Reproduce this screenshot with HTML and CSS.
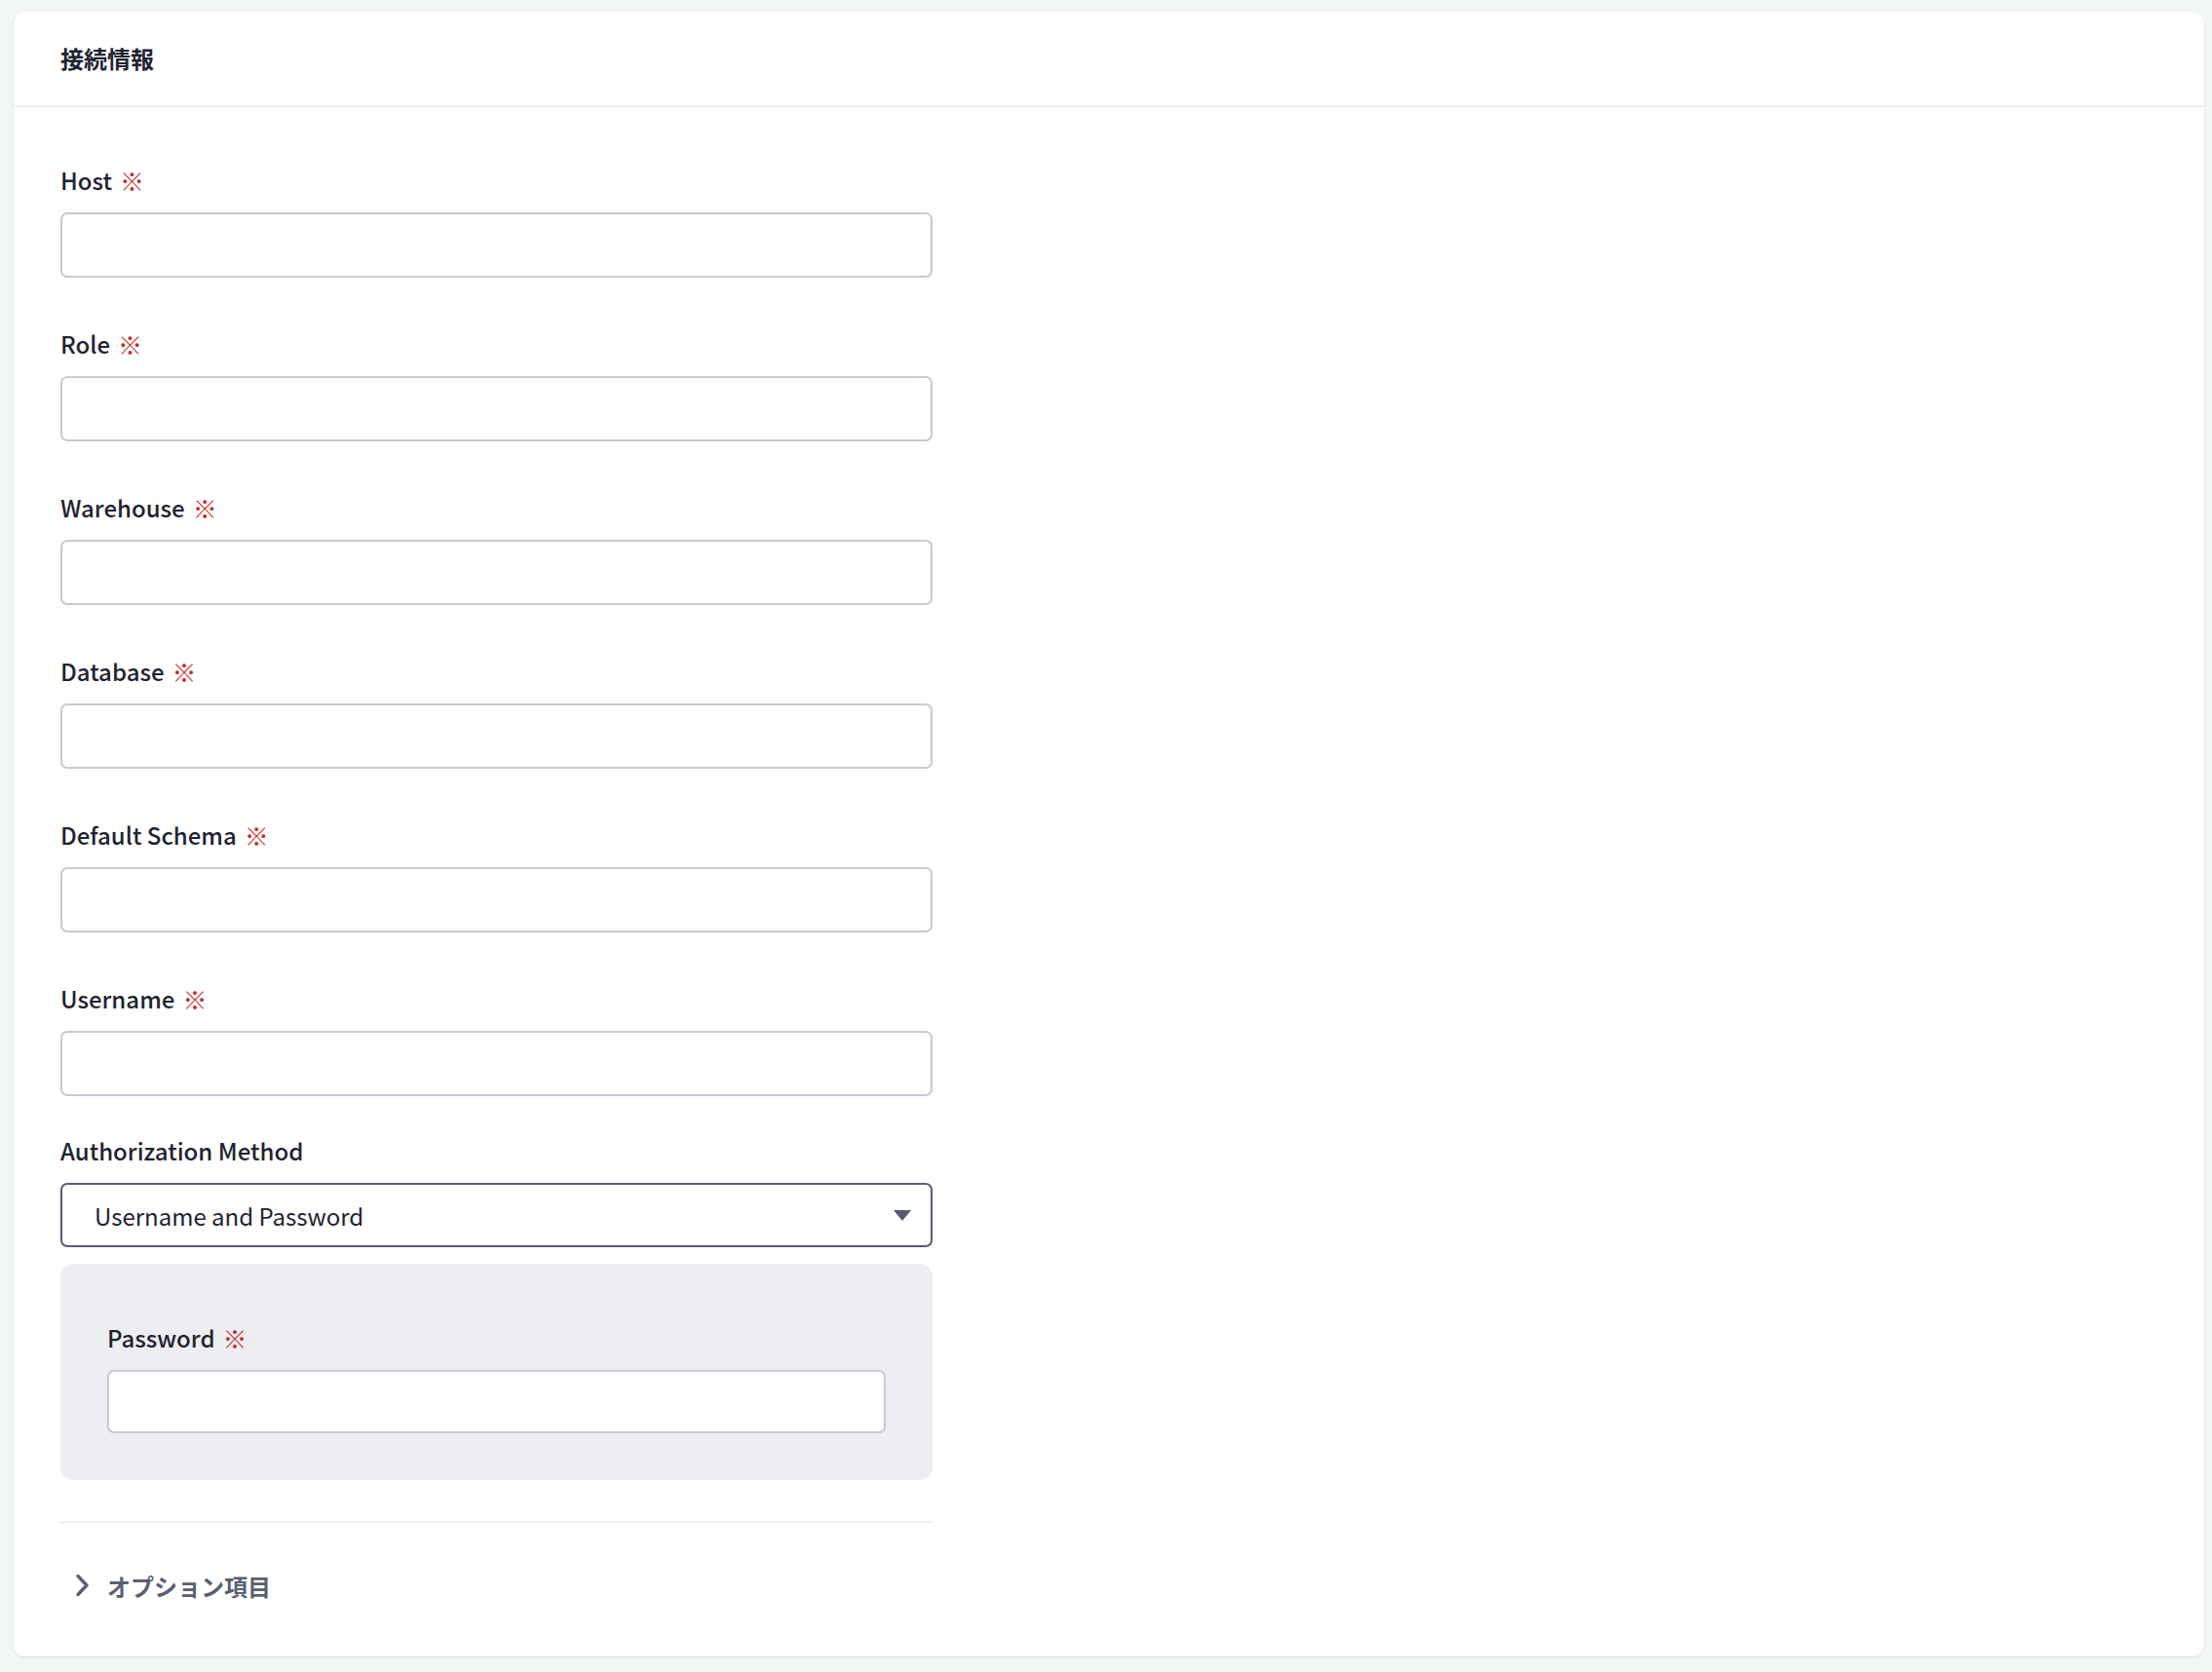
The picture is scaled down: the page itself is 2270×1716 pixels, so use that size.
FILE: index.html
```html
<!DOCTYPE html>
<html lang="ja">
<head>
<meta charset="utf-8">
<title>接続情報</title>
<link rel="stylesheet" href="styles.css">
</head>
<body>
<section class="card">
  <header class="card-header">
    <h2 class="card-title">接続情報</h2>
  </header>
  <div class="card-body">
    <div class="form">
      <div class="field">
        <label class="label">Host<span class="req">※</span></label>
        <input class="input" type="text">
      </div>
      <div class="field">
        <label class="label">Role<span class="req">※</span></label>
        <input class="input" type="text">
      </div>
      <div class="field">
        <label class="label">Warehouse<span class="req">※</span></label>
        <input class="input" type="text">
      </div>
      <div class="field">
        <label class="label">Database<span class="req">※</span></label>
        <input class="input" type="text">
      </div>
      <div class="field">
        <label class="label">Default Schema<span class="req">※</span></label>
        <input class="input" type="text">
      </div>
      <div class="field">
        <label class="label">Username<span class="req">※</span></label>
        <input class="input" type="text">
      </div>
      <div class="field field-tight">
        <label class="label">Authorization Method</label>
        <div class="select">
          <span class="select-value">Username and Password</span>
          <svg class="select-arrow" width="18" height="11" viewBox="0 0 18 11"><path d="M0 0 H18 L9 11 Z" fill="#555a6e"/></svg>
        </div>
      </div>
      <div class="panel">
        <label class="label">Password<span class="req">※</span></label>
        <input class="input input-panel" type="password">
      </div>
      <div class="divider"></div>
      <div class="options">
        <svg class="chevron" width="18" height="24" viewBox="0 0 18 24"><path d="M4 2.5 L13 12 L4 21.5" fill="none" stroke="#5a5f73" stroke-width="3.4" stroke-linecap="round" stroke-linejoin="round"/></svg>
        <span class="options-text">オプション項目</span>
      </div>
    </div>
  </div>
</section>
</body>
</html>
```
FILE: styles.css
```css
* { box-sizing: border-box; }
html, body { margin: 0; padding: 0; }
body {
  background: #f3f6f7;
  font-family: "Noto Sans CJK JP", "Noto Sans", sans-serif;
  color: #1f2330;
  padding: 12px 8px 16px 14px;
}
.card {
  background: #fff;
  border-radius: 12px;
  box-shadow: 0 1px 3px rgba(30, 40, 60, 0.10);
  height: 1688px;
}
.card-header {
  height: 98px;
  border-bottom: 2px solid #eef0f2;
  display: flex;
  align-items: center;
  padding-left: 48px;
}
.card-title {
  margin: 0;
  font-size: 24px;
  font-weight: 700;
  color: #1f2330;
  line-height: 1;
}
.card-body {
  padding: 56px 48px 52px 48px;
}
.form {
  width: 895px;
  display: flex;
  flex-direction: column;
}
.field {
  display: flex;
  flex-direction: column;
  margin-bottom: 49px;
}
.field:nth-child(6) { margin-bottom: 37px; }
.field-tight { margin-bottom: 17px; }
.label {
  display: flex;
  align-items: center;
  font-size: 24px;
  line-height: 38px;
  height: 38px;
  font-weight: 500;
  color: #1f2330;
  margin-bottom: 14px;
}
.req {
  color: #c42b2b;
  font-size: 25px;
  margin-left: 8px;
  font-weight: 400;
}
.input {
  display: block;
  width: 100%;
  height: 67px;
  border: 2px solid #c9cad3;
  border-radius: 7px;
  background: #fff;
  font: inherit;
  padding: 0 20px;
  outline: none;
}
.select {
  height: 66px;
  border: 2px solid #5a5d70;
  border-radius: 7px;
  display: flex;
  align-items: center;
  justify-content: space-between;
  padding: 0 20px 0 33px;
}
.select-value {
  font-size: 24px;
  color: #1f2330;
  font-weight: 400;
}
.panel {
  background: #edeef1;
  border-radius: 14px;
  padding: 57px 48px 48px 48px;
}
.input-panel { height: 65px; }
.divider {
  height: 2px;
  background: #eef0f2;
  margin-top: 42px;
}
.options {
  margin-top: 44px;
  height: 40px;
  display: flex;
  align-items: center;
  padding-left: 14px;
}
.chevron { margin-right: 16px; }
.options-text {
  font-size: 24px;
  font-weight: 700;
  color: #5a5f73;
}
```
